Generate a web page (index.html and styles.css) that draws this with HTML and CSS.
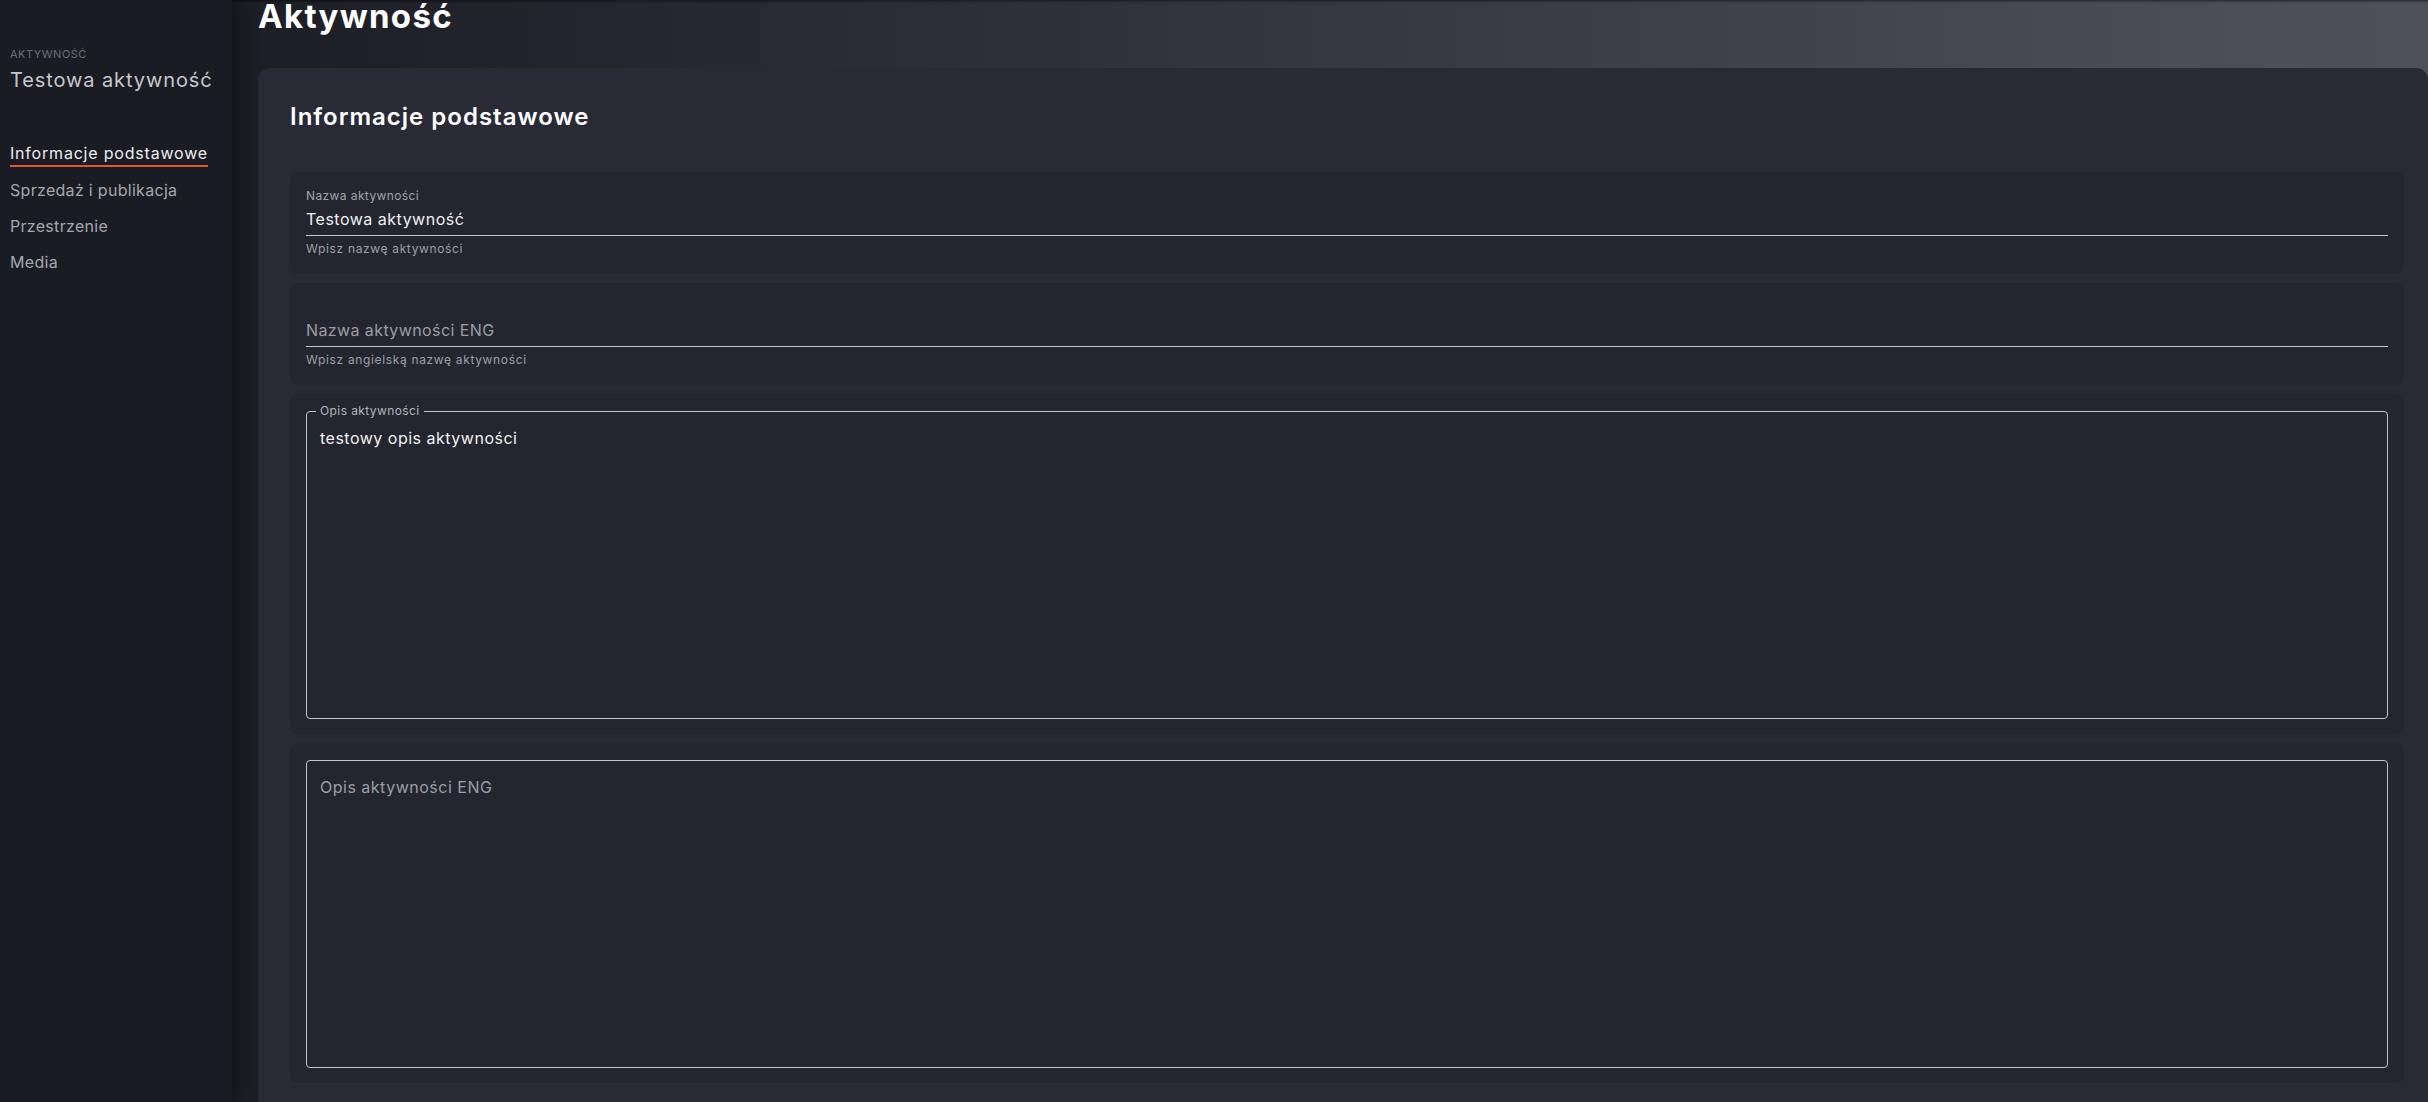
FILE: index.html
```html
<!DOCTYPE html>
<html lang="pl">
<head>
<meta charset="utf-8">
<title>Aktywność</title>
<link rel="stylesheet" href="styles.css">
</head>
<body>
<div class="app">
  <aside class="sidebar">
    <div class="sb-eyebrow">AKTYWNOŚĆ</div>
    <div class="sb-title">Testowa aktywność</div>
    <nav class="sb-nav">
      <a class="sb-link active"><span>Informacje podstawowe</span></a>
      <a class="sb-link"><span>Sprzedaż i publikacja</span></a>
      <a class="sb-link"><span>Przestrzenie</span></a>
      <a class="sb-link"><span>Media</span></a>
    </nav>
  </aside>
  <main class="main">
    <header class="page-header">
      <h1 class="page-title">Aktywność</h1>
    </header>
    <section class="card">
      <h2 class="card-title">Informacje podstawowe</h2>
      <div class="fields">
        <div class="field-box">
          <div class="f-label">Nazwa aktywności</div>
          <div class="f-input">Testowa aktywność</div>
          <div class="f-helper">Wpisz nazwę aktywności</div>
        </div>
        <div class="field-box">
          <div class="f-label"></div>
          <div class="f-input empty">Nazwa aktywności ENG</div>
          <div class="f-helper">Wpisz angielską nazwę aktywności</div>
        </div>
        <div class="field-box area">
          <div class="outline">
            <span class="legend">Opis aktywności</span>
            <div class="ta">testowy opis aktywności</div>
          </div>
        </div>
        <div class="field-box area">
          <div class="outline">
            <div class="ta empty">Opis aktywności ENG</div>
          </div>
        </div>
      </div>
    </section>
  </main>
</div>
</body>
</html>
```

FILE: styles.css
```css
* { box-sizing: border-box; }
html, body {
  margin: 0;
  padding: 0;
  height: 1102px;
  overflow: hidden;
  background: #1b1d24;
  font-family: Inter, "Noto Sans", sans-serif;
}
.app {
  display: flex;
  height: 1102px;
}
.sidebar {
  width: 232px;
  flex: 0 0 232px;
  background: #1a1c23;
  padding: 47px 10px 0 10px;
  box-shadow: 6px 0 18px rgba(0,0,0,0.35);
  position: relative;
  z-index: 1;
}
.sb-eyebrow {
  font-size: 11px;
  line-height: 14px;
  color: #6a6d76;
  letter-spacing: 0.5px;
}
.sb-title {
  margin-top: 5px;
  font-size: 20px;
  line-height: 28px;
  color: #c6c7cb;
  letter-spacing: 0.9px;
}
.sb-nav {
  margin-top: 48px;
  display: flex;
  flex-direction: column;
  align-items: flex-start;
}
.sb-link {
  display: block;
  margin-bottom: 12px;
  font-size: 16px;
  line-height: 22px;
  color: #a6a7ad;
  letter-spacing: 0.3px;
  text-decoration: none;
}
.sb-link span {
  display: inline-block;
  border-bottom: 2px solid transparent;
}
.sb-link.active { color: #ececee; letter-spacing: 0.8px; }
.sb-link.active span {
  border-bottom-color: #e2553c;
  line-height: 21px;
  padding-bottom: 1px;
}

.main {
  flex: 1;
  min-width: 0;
  padding-left: 26px;
  background: linear-gradient(90deg, #1c1e25 0%, #23252d 15%, #2d3039 35%, #3a3c46 60%, #4a4c57 88%, #4e505b 100%);
  display: flex;
  flex-direction: column;
}
.page-header {
  height: 68px;
  flex: 0 0 68px;
  box-shadow: inset 0 3px 3px -2px rgba(0,0,0,0.55);
  margin-left: -26px;
  padding-left: 26px;
  padding-top: 2px;
}
.page-title {
  margin: 0;
  font-size: 33px;
  line-height: 28px;
  font-weight: 700;
  color: #ffffff;
  letter-spacing: 1.3px;
}
.card {
  flex: 1;
  background: #282b35;
  border-radius: 12px 12px 0 0;
  padding: 33px 24px 0 32px;
}
.card-title {
  margin: 0 0 39px 0;
  font-size: 24px;
  line-height: 32px;
  font-weight: 600;
  color: #ffffff;
  letter-spacing: 1px;
}
.fields {
  display: flex;
  flex-direction: column;
  gap: 9px;
}
.field-box {
  background: #23262f;
  border-radius: 8px;
  padding: 17px 16px 15px 16px;
}
.f-label {
  height: 14px;
  font-size: 12px;
  line-height: 14px;
  color: #a2a3a9;
  letter-spacing: 0.4px;
}
.f-input {
  padding: 5px 0 4px 0;
  font-size: 16px;
  line-height: 23px;
  color: #f0f0f2;
  border-bottom: 1px solid #c6c7ca;
  letter-spacing: 0.5px;
}
.f-input.empty { color: #9c9da3; letter-spacing: 0.4px; }
.f-helper {
  margin-top: 3px;
  font-size: 12px;
  line-height: 20px;
  color: #9d9ea4;
  letter-spacing: 0.65px;
}
.field-box.area {
  padding-top: 17px;
  padding-bottom: 15px;
}
.outline {
  position: relative;
  height: 308px;
  border: 1px solid #c3c4c8;
  border-radius: 4px;
}
.legend {
  position: absolute;
  top: -8px;
  left: 9px;
  padding: 0 4px;
  background: #23262f;
  font-size: 12px;
  line-height: 14px;
  color: #b4b5ba;
  letter-spacing: 0.4px;
}
.ta {
  padding: 15px 13px;
  font-size: 16px;
  line-height: 23px;
  color: #f0f0f2;
  letter-spacing: 0.5px;
}
.ta.empty { color: #9c9da3; }
```
